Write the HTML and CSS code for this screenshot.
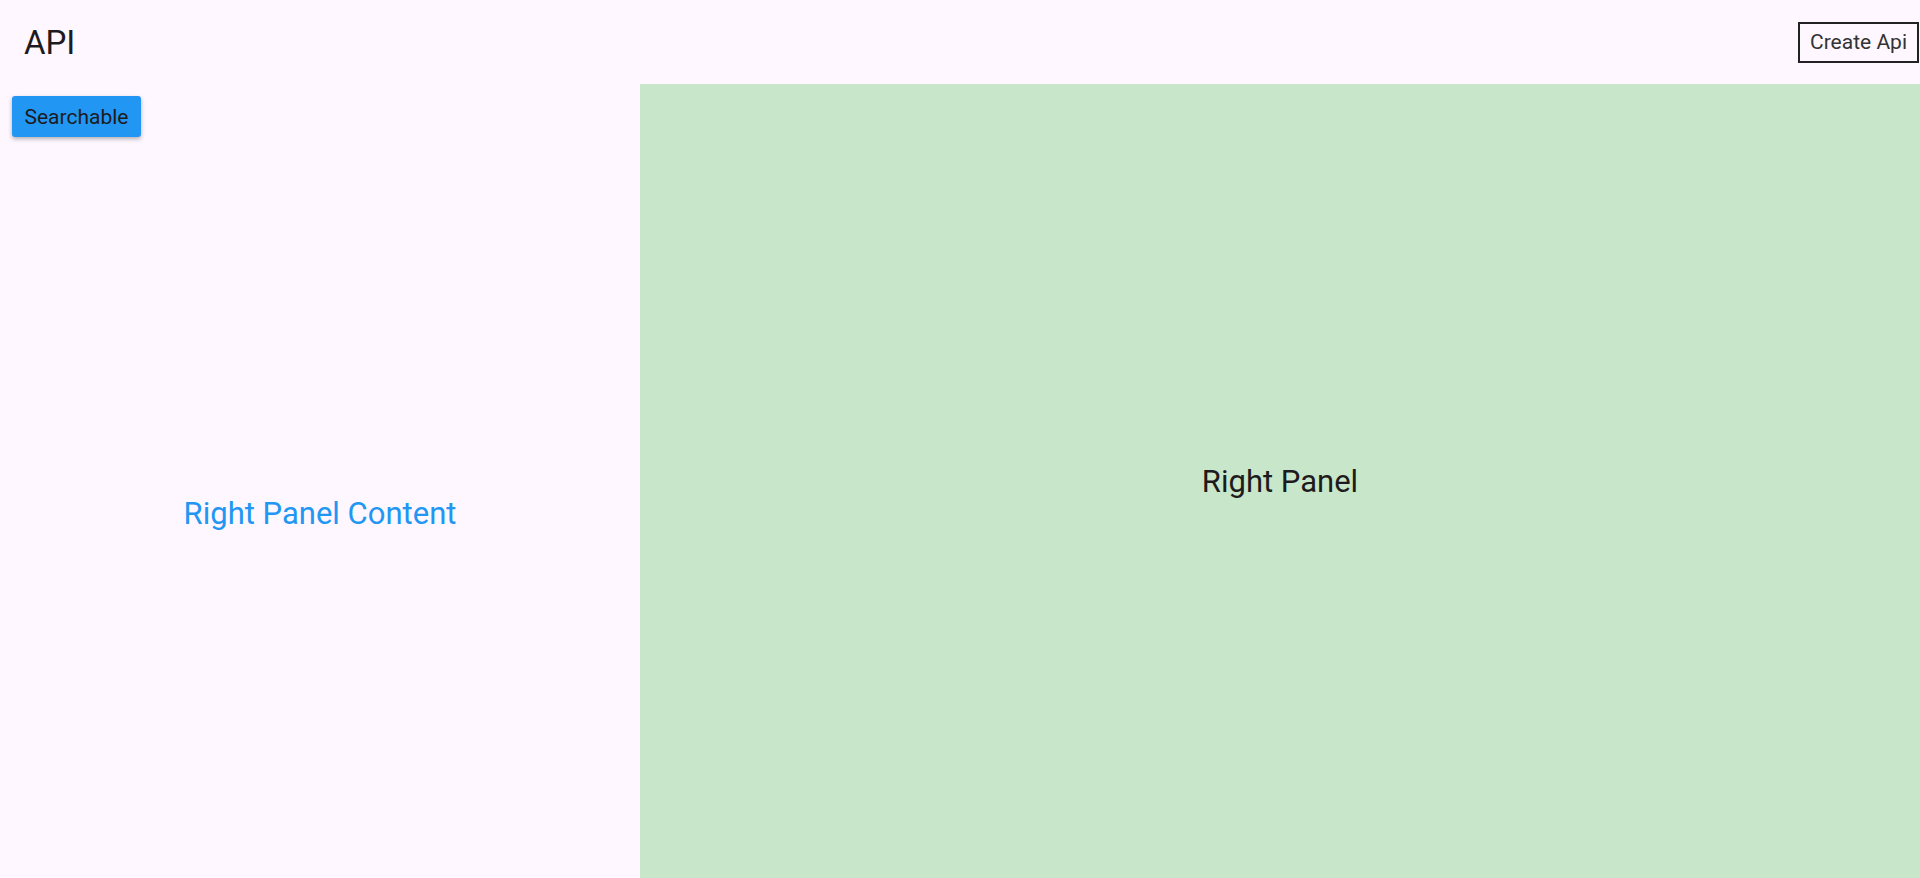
FILE: index.html
```html
<!DOCTYPE html>
<html>
<head>
<meta charset="utf-8">
<link rel="stylesheet" href="styles.css">
</head>
<body>
<div class="app">
  <header class="appbar">
    <div class="title">API</div>
    <button class="create-btn">Create Api</button>
  </header>
  <main class="content">
    <section class="left">
      <div class="left-top"><button class="search-btn">Searchable</button></div>
      <div class="left-center">Right Panel Content</div>
    </section>
    <section class="right">Right Panel</section>
  </main>
</div>
</body>
</html>
```
FILE: styles.css
```css
html, body { margin: 0; padding: 0; height: 100%; }
body { background: #FEF7FF; font-family: Roboto, "Noto Sans", sans-serif; color: #1D1B20; }
.app { display: flex; flex-direction: column; height: 878px; width: 1920px; }
.appbar { height: 84px; display: flex; align-items: center; justify-content: space-between; padding-left: 24px; box-sizing: border-box; }
.title { font-size: 33px; font-weight: 400; line-height: 1; }
.create-btn { background: transparent; border: 2px solid #222; font-family: Roboto, sans-serif; font-size: 21px; color: #333; height: 41px; padding: 0 10px; margin-right: 1px; box-sizing: border-box; }
.content { flex: 1; display: flex; }
.left { width: 640px; display: flex; flex-direction: column; }
.left-top { padding: 12px; }
.search-btn { background: #2196F3; border: none; border-radius: 3px; height: 41px; width: 129px; font-family: Roboto, sans-serif; font-size: 21px; color: #1D1B20; box-shadow: 0 2px 4px rgba(0,0,0,0.3); padding: 0; }
.left-center { flex: 1; display: flex; align-items: center; justify-content: center; color: #2196F3; font-size: 31px; }
.right { flex: 1; background: #C8E6C9; display: flex; align-items: center; justify-content: center; font-size: 31px; color: #1D1B20; }
```
